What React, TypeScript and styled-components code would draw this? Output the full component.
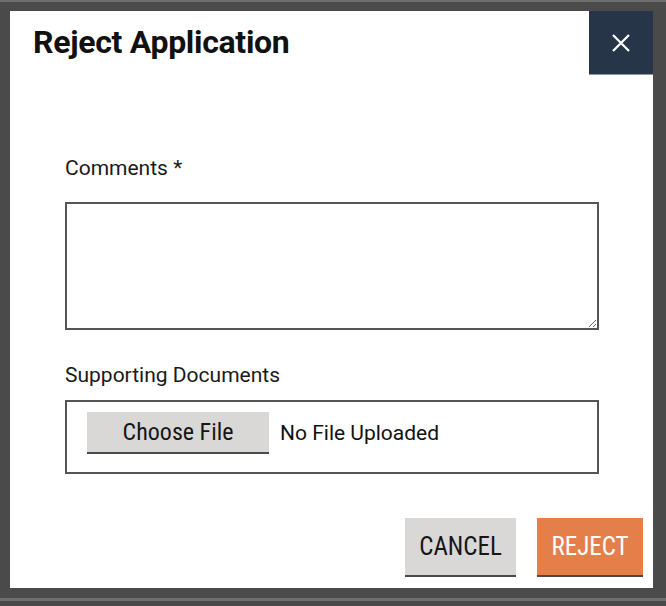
import styled, { createGlobalStyle } from "styled-components"

const GlobalStyle = createGlobalStyle`
  html, body {
    margin: 0;
    padding: 0;
    background: #4a4a4a;
  }
  body {
    font-family: Roboto, "Liberation Sans", sans-serif;
    border-top: 2px solid #6e6e6e;
    border-bottom: 3px solid #6e6e6e;
    height: 601px;
    box-sizing: border-box;
    overflow: hidden;
  }
`

const Modal = styled.div`
  margin: 9px 13px 0 10px;
  width: 643px;
  height: 577px;
  background: #fff;
  display: flex;
  flex-direction: column;
`

const Header = styled.div`
  display: flex;
  justify-content: space-between;
  align-items: flex-start;
  height: 64px;
`

const Title = styled.h1`
  margin: 12px 0 0 23px;
  font-size: 32px;
  font-weight: 700;
  letter-spacing: -0.3px;
  color: #111;
`

const CloseButton = styled.button`
  width: 64px;
  height: 64px;
  border: none;
  border-bottom: 1px solid #8796a8;
  background: #263548;
  display: flex;
  align-items: center;
  justify-content: center;
  padding: 0;
  cursor: pointer;
`

const Body = styled.div`
  padding: 81px 54px 0 55px;
  display: flex;
  flex-direction: column;
`

const Label = styled.label<{ $gap: number }>`
  font-size: 21px;
  color: #1a1a1a;
  margin-bottom: ${(p) => p.$gap}px;
`

const Comments = styled.textarea`
  width: 534px;
  height: 128px;
  box-sizing: border-box;
  border: 2px solid #555;
  resize: vertical;
  margin: 0 0 33px;
  font-family: inherit;
`

const FileBox = styled.div`
  width: 534px;
  height: 74px;
  box-sizing: border-box;
  border: 2px solid #555;
  display: flex;
  align-items: flex-start;
  padding: 10px 0 0 20px;
  gap: 11px;
`

const FlatButton = styled.button<{ $accent?: boolean }>`
  border: none;
  border-bottom: 2px solid #4a4a4a;
  background: ${(p) => (p.$accent ? "#e57f4a" : "#d9d8d6")};
  color: ${(p) => (p.$accent ? "#fff" : "#161616")};
  font-family: Roboto, sans-serif;
  padding: 0;
  cursor: pointer;
  white-space: nowrap;
`

const ChooseButton = styled(FlatButton)`
  width: 182px;
  height: 42px;
  font-size: 24px;
  font-stretch: semi-condensed;
`

const FileName = styled.span`
  font-size: 21px;
  color: #111;
  line-height: 42px;
`

const Footer = styled.div`
  display: flex;
  justify-content: flex-end;
  gap: 21px;
  padding: 44px 10px 0 0;
`

const ActionButton = styled(FlatButton)<{ $width: number }>`
  width: ${(p) => p.$width}px;
  height: 59px;
  font-size: 25px;
  font-stretch: condensed;
`

export default function App() {
  return (
    <>
      <GlobalStyle />
      <Modal>
        <Header>
          <Title>Reject Application</Title>
          <CloseButton aria-label="Close">
            <svg width="20" height="20" viewBox="0 0 20 20">
              <path d="M2 2 L18 18 M18 2 L2 18" stroke="#fff" strokeWidth="2.2" />
            </svg>
          </CloseButton>
        </Header>
        <Body>
          <Label $gap={22}>Comments *</Label>
          <Comments />
          <Label $gap={13}>Supporting Documents</Label>
          <FileBox>
            <ChooseButton>Choose File</ChooseButton>
            <FileName>No File Uploaded</FileName>
          </FileBox>
        </Body>
        <Footer>
          <ActionButton $width={111}>CANCEL</ActionButton>
          <ActionButton $width={106} $accent>
            REJECT
          </ActionButton>
        </Footer>
      </Modal>
    </>
  )
}
